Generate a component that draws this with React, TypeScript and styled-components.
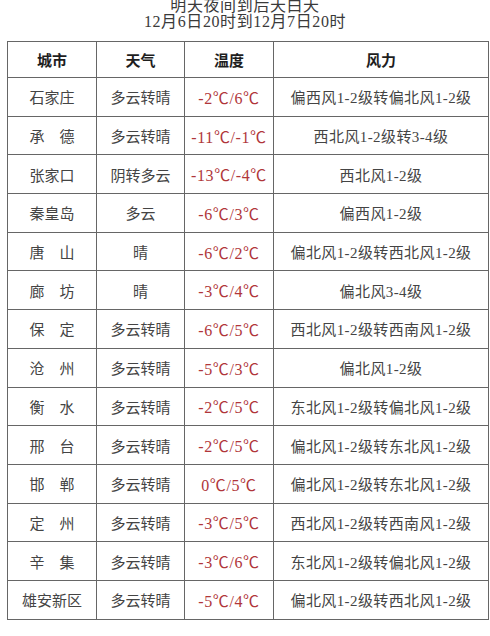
import React from "react";
import styled, { createGlobalStyle } from "styled-components";

const GlobalStyle = createGlobalStyle`
  body {
    margin: 0;
    background: #ffffff;
    font-family: "Liberation Serif", "Noto Sans CJK SC", serif;
    color: #444444;
  }
`;

const Page = styled.div`
  width: 490px;
  height: 636px;
  overflow: hidden;
  padding-left: 7px;
  box-sizing: border-box;
`;

const Title = styled.div`
  width: 476px;
  margin-top: -2px;
  text-align: center;
  font-size: 16px;
  line-height: 16px;
  color: #3a3a3a;
  letter-spacing: 0.6px;
`;

const Table = styled.table`
  width: 477px;
  margin-top: 11px;
  border-collapse: collapse;
  table-layout: fixed;
  font-size: 15px;

  td,
  th {
    border: 1.3px solid #666666;
    text-align: center;
    vertical-align: middle;
    padding: 0;
    white-space: nowrap;
  }
`;

const HeadCell = styled.th<{ $w: number }>`
  width: ${(p) => p.$w}px;
  height: 35px;
  font-weight: bold;
  color: #1e1e1e;
`;

const Row = styled.tr`
  height: 38.7px;
`;

const Cell = styled.td<{ $spread?: boolean }>`
  color: #444444;
  letter-spacing: ${(p) => (p.$spread ? "0.4px" : "0")};
`;

const TempCell = styled.td`
  color: #b0363a;
  font-size: 16px;
  letter-spacing: 0.6px;
`;

const rows = [
  ["石家庄", "多云转晴", "-2℃/6℃", "偏西风1-2级转偏北风1-2级"],
  ["承　德", "多云转晴", "-11℃/-1℃", "西北风1-2级转3-4级"],
  ["张家口", "阴转多云", "-13℃/-4℃", "西北风1-2级"],
  ["秦皇岛", "多云", "-6℃/3℃", "偏西风1-2级"],
  ["唐　山", "晴", "-6℃/2℃", "偏北风1-2级转西北风1-2级"],
  ["廊　坊", "晴", "-3℃/4℃", "偏北风3-4级"],
  ["保　定", "多云转晴", "-6℃/5℃", "西北风1-2级转西南风1-2级"],
  ["沧　州", "多云转晴", "-5℃/3℃", "偏北风1-2级"],
  ["衡　水", "多云转晴", "-2℃/5℃", "东北风1-2级转偏北风1-2级"],
  ["邢　台", "多云转晴", "-2℃/5℃", "偏北风1-2级转东北风1-2级"],
  ["邯　郸", "多云转晴", "0℃/5℃", "偏北风1-2级转东北风1-2级"],
  ["定　州", "多云转晴", "-3℃/5℃", "西北风1-2级转西南风1-2级"],
  ["辛　集", "多云转晴", "-3℃/6℃", "东北风1-2级转偏北风1-2级"],
  ["雄安新区", "多云转晴", "-5℃/4℃", "偏北风1-2级转西北风1-2级"],
];

export default function App() {
  return (
    <Page>
      <GlobalStyle />
      <Title>
        <div>明天夜间到后天白天</div>
        <div>12月6日20时到12月7日20时</div>
      </Title>
      <Table>
        <thead>
          <tr>
            <HeadCell $w={88}>城市</HeadCell>
            <HeadCell $w={87}>天气</HeadCell>
            <HeadCell $w={88}>温度</HeadCell>
            <HeadCell $w={214}>风力</HeadCell>
          </tr>
        </thead>
        <tbody>
          {rows.map((r) => (
            <Row key={r[0]}>
              <Cell>{r[0]}</Cell>
              <Cell>{r[1]}</Cell>
              <TempCell>{r[2]}</TempCell>
              <Cell $spread>{r[3]}</Cell>
            </Row>
          ))}
        </tbody>
      </Table>
    </Page>
  );
}
